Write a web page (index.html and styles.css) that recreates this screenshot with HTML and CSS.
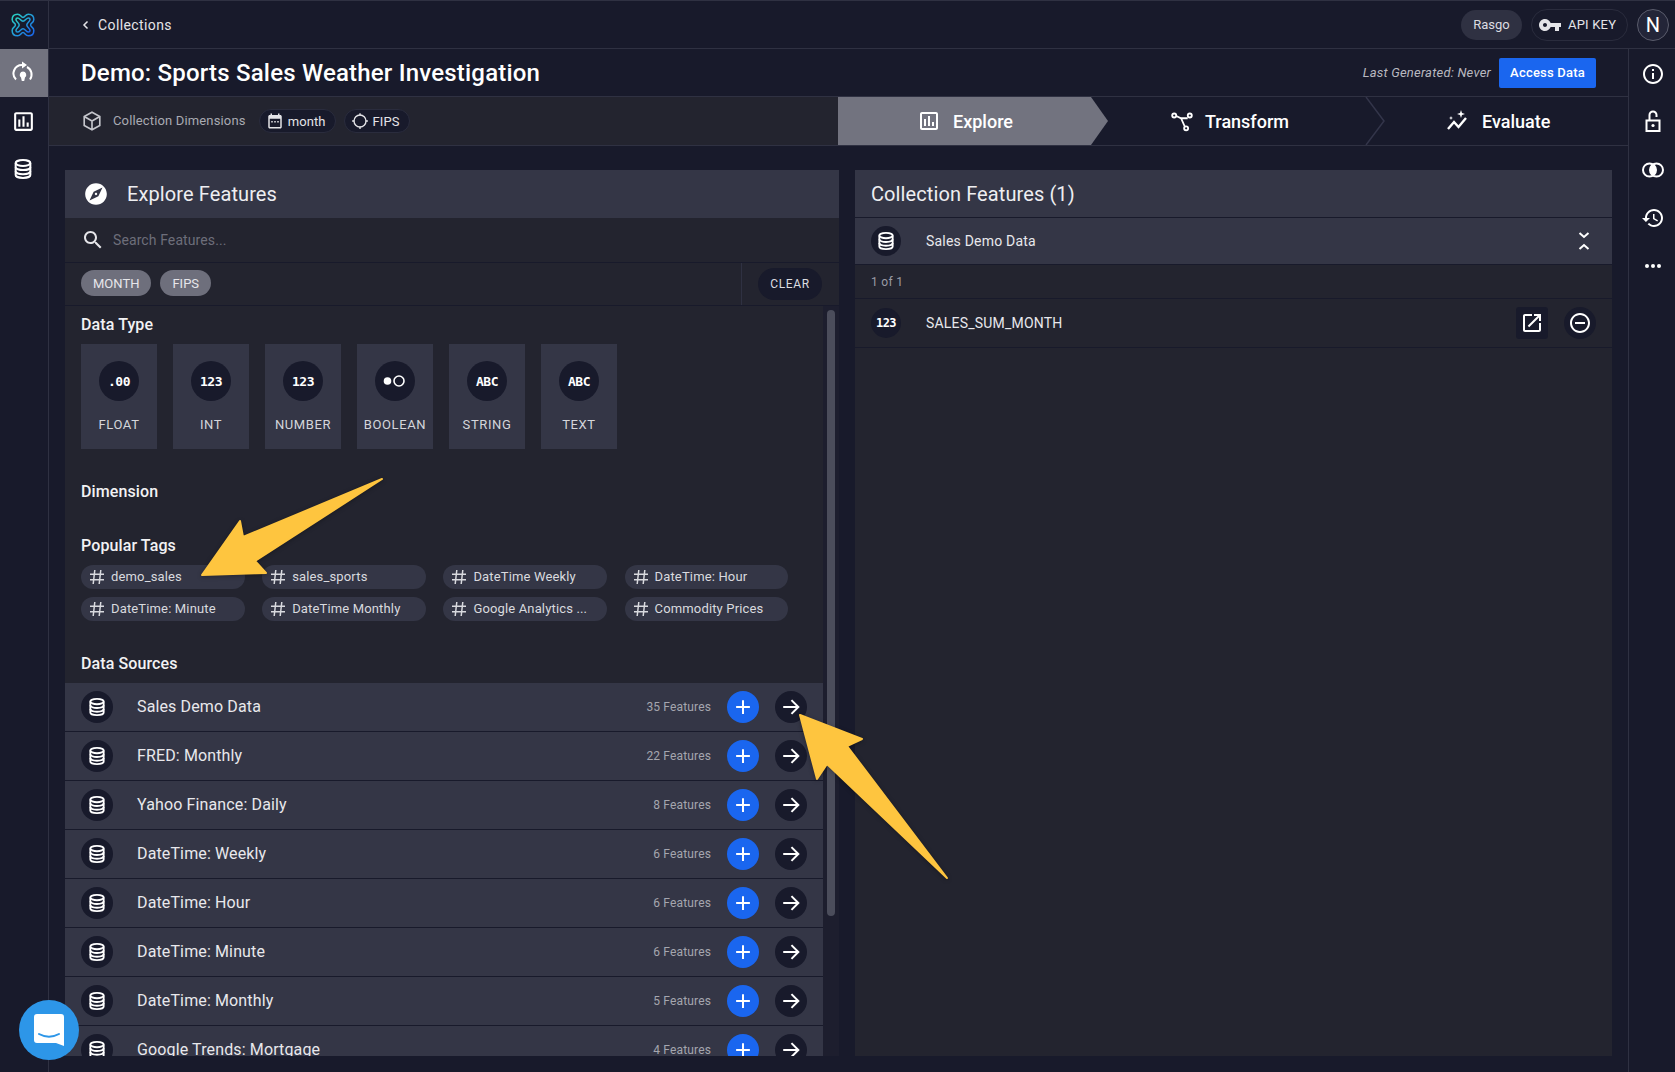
FILE: index.html
```html
<!DOCTYPE html>
<html lang="en">
<head>
    <meta charset="UTF-8">
    <title>Demo: Sports Sales Weather Investigation</title>
    <link rel="stylesheet" href="styles.css">
</head>
<body>
    <svg class="sprites" width="0" height="0">
        <defs>
            <linearGradient id="logo-grad" x1="0" y1="0" x2="1" y2="1">
                <stop offset="0" stop-color="#2ad6c2"/>
                <stop offset="1" stop-color="#1a63ee"/>
            </linearGradient>
        </defs>
        <symbol id="i-db" viewBox="0 0 24 24"><g fill="none" stroke="currentColor" stroke-width="2.200"><ellipse cx="12" cy="5.500" rx="8" ry="3.200"/><path d="M4 5.500v13c0 1.800 3.600 3.200 8 3.200s8-1.400 8-3.200v-13"/><path d="M4 10c0 1.800 3.600 3.200 8 3.200s8-1.400 8-3.200M4 14.500c0 1.800 3.600 3.200 8 3.200s8-1.400 8-3.200"/></g></symbol>
        <symbol id="i-chart" viewBox="0 0 24 24"><path fill="currentColor" d="M19 3H5c-1.100 0-2 .9-2 2v14c0 1.100.9 2 2 2h14c1.100 0 2-.9 2-2V5c0-1.100-.9-2-2-2zm0 16H5V5h14v14zM7 10h2v7H7zm4-3h2v10h-2zm4 6h2v4h-2z"/></symbol>
        <symbol id="i-hash" viewBox="0 0 16 16"><path fill="none" stroke="currentColor" stroke-width="1.500" d="M5.800 1 4.200 15M11.800 1l-1.600 14M1 5.300h14M1 10.700h14"/></symbol>
        <symbol id="i-plus" viewBox="0 0 24 24"><path fill="none" stroke="currentColor" stroke-width="2.200" d="M12 4.500v15M4.500 12h15"/></symbol>
        <symbol id="i-arrow" viewBox="0 0 24 24"><path fill="none" stroke="currentColor" stroke-width="2.200" d="M3.500 12h16M12.500 4.500 20 12l-7.500 7.500"/></symbol>
    </svg>

    <div class="app">
        <aside class="rail">
            <div class="rail-item rail-logo">
                <svg width="26" height="26" viewBox="0 0 24 24" fill="none" stroke="url(#logo-grad)" stroke-width="1.400"><path d="M7 2C10 2 10 5 12 5C14 5 14 2 17 2C21 2 22 5 22 7C22 10 19 10 19 12C19 14 22 14 22 17C22 21 19 22 17 22C14 22 14 19 12 19C10 19 10 22 7 22C3 22 2 19 2 17C2 14 5 14 5 12C5 10 2 10 2 7C2 3 5 2 7 2Z"/><path d="M7 5.500C9 5.500 10 8.500 12 8.500C14 8.500 15 5.500 17 5.500C18 5.500 18.500 6 18.500 7C18.500 9 15.500 10 15.500 12C15.500 14 18.500 15 18.500 17C18.500 18 18 18.500 17 18.500C15 18.500 14 15.500 12 15.500C10 15.500 9 18.500 7 18.500C6 18.500 5.500 18 5.500 17C5.500 15 8.500 14 8.500 12C8.500 10 5.500 9 5.500 7C5.500 6 6 5.500 7 5.500Z"/></svg>
            </div>
            <div class="rail-item rail-active">
                <svg width="24" height="24" viewBox="0 0 24 24"><g fill="none" stroke="currentColor" stroke-width="2"><path d="M5 18.500a8.500 8.500 0 0 1 6-14.500"/><path d="M19 18.500a8.500 8.500 0 0 0-3-12.500"/></g><path fill="currentColor" d="M11 .5 16 4l-5 3.500zM12 10.500a3.300 3.300 0 0 1 2 5.900L13.200 20h-2.400L10 16.400a3.300 3.300 0 0 1 2-5.900z"/></svg>
            </div>
            <div class="rail-item"><svg width="25" height="25"><use href="#i-chart"/></svg></div>
            <div class="rail-item"><svg width="22" height="22"><use href="#i-db"/></svg></div>
        </aside>

        <div class="main">
            <header class="topbar">
                <div class="crumb">
                    <svg width="10" height="10" viewBox="0 0 10 10"><path fill="none" stroke="currentColor" stroke-width="1.500" d="M6.500 1.500 3 5l3.500 3.500"/></svg>
                    <span>Collections</span>
                </div>
                <div class="topbar-right">
                    <span class="org-pill">Rasgo</span>
                    <span class="key-pill">
                        <svg width="24" height="24" viewBox="0 0 24 24"><path fill="currentColor" d="M12.650 10C11.830 7.670 9.610 6 7 6c-3.310 0-6 2.690-6 6s2.690 6 6 6c2.610 0 4.830-1.670 5.650-4H17v4h4v-4h2v-4H12.650zM7 14c-1.100 0-2-.9-2-2s.9-2 2-2 2 .9 2 2-.9 2-2 2z"/></svg>
                        API KEY
                    </span>
                    <span class="avatar">N</span>
                </div>
            </header>

            <div class="workspace">
                <div class="content">
                    <div class="title-row">
                        <h1>Demo: Sports Sales Weather Investigation</h1>
                        <div class="title-actions">
                            <em>Last Generated: Never</em>
                            <button class="btn-primary">Access Data</button>
                        </div>
                    </div>

                    <div class="steps-row">
                        <div class="dims">
                            <svg class="dims-cube" width="22" height="22" viewBox="0 0 24 24" fill="none" stroke="currentColor" stroke-width="1.800"><path d="M12 2.500 20.500 7v10L12 21.500 3.500 17V7zM3.500 7 12 12l8.500-5M12 12v9.500"/></svg>
                            <span class="dims-label">Collection Dimensions</span>
                            <span class="dim-chip">
                                <svg width="18" height="18" viewBox="0 0 24 24"><path fill="currentColor" d="M19 4h-1V2h-2v2H8V2H6v2H5c-1.100 0-2 .9-2 2v14c0 1.100.9 2 2 2h14c1.100 0 2-.9 2-2V6c0-1.100-.9-2-2-2zm0 16H5V9h14v11zM7 12h2v2H7zm4 0h2v2h-2zm4 0h2v2h-2z"/></svg>
                                month
                            </span>
                            <span class="dim-chip">
                                <svg width="18" height="18" viewBox="0 0 24 24" fill="none" stroke="currentColor" stroke-width="1.800"><circle cx="12" cy="12" r="8"/><path d="M12 1.500v3M12 19.500v3M1.500 12h3M19.500 12h3"/></svg>
                                FIPS
                            </span>
                        </div>
                        <nav class="steps">
                            <div class="step step-explore">
                                <svg width="24" height="24"><use href="#i-chart"/></svg>
                                <span>Explore</span>
                            </div>
                            <div class="step step-transform">
                                <svg width="22" height="22" viewBox="0 0 24 24" fill="none" stroke="currentColor" stroke-width="2"><circle cx="3.500" cy="6" r="2.200"/><circle cx="20.500" cy="6" r="2.200"/><circle cx="16.500" cy="20" r="2.200"/><path d="M5.700 6.500 11 9h7.200M11 9l4 9"/></svg>
                                <span>Transform</span>
                                <svg class="step-chevron" width="20" height="48" viewBox="0 0 20 48"><path fill="none" stroke="#33354a" stroke-width="1.500" d="M1 0 19 24 1 48"/></svg>
                            </div>
                            <div class="step step-evaluate">
                                <svg width="24" height="24" viewBox="0 0 24 24"><path fill="none" stroke="currentColor" stroke-width="2.400" d="M2 20l6-7 4.500 5L20 9"/><path fill="currentColor" d="M15 1l1 3 3 1-3 1-1 3-1-3-3-1 3-1zM5 7l.6 1.500L7 9l-1.400.5L5 11l-.6-1.500L3 9l1.400-.5z"/></svg>
                                <span>Evaluate</span>
                            </div>
                        </nav>
                    </div>

                    <div class="panels">
                        <section class="panel panel-explore">
                            <div class="panel-head">
                                <svg class="head-icon" width="26" height="26" viewBox="0 0 24 24"><path fill="currentColor" d="M12 10.900c-.61 0-1.100.49-1.100 1.100s.49 1.100 1.100 1.100c.61 0 1.100-.49 1.100-1.100s-.49-1.100-1.100-1.100zM12 2C6.480 2 2 6.480 2 12s4.480 10 10 10 10-4.480 10-10S17.520 2 12 2zm2.190 12.190L6 18l3.810-8.190L18 6l-3.810 8.190z"/></svg>
                                <h2>Explore Features</h2>
                            </div>
                            <div class="search">
                                <svg width="24" height="24" viewBox="0 0 24 24"><path fill="currentColor" d="M15.500 14h-.79l-.28-.27C15.410 12.590 16 11.110 16 9.500 16 5.910 13.090 3 9.500 3S3 5.910 3 9.500 5.910 16 9.500 16c1.610 0 3.090-.59 4.230-1.570l.27.28v.79l5 4.990L20.490 19l-4.990-5zm-6 0C7.010 14 5 11.990 5 9.500S7.010 5 9.500 5 14 7.010 14 9.500 11.990 14 9.500 14z"/></svg>
                                <span>Search Features...</span>
                            </div>
                            <div class="filters">
                                <div class="filter-chips">
                                    <span class="filter-chip">MONTH</span>
                                    <span class="filter-chip">FIPS</span>
                                </div>
                                <div class="filter-clear"><span>CLEAR</span></div>
                            </div>
                            <div class="scroll-area">
                                <div class="scroll-body">
                                    <h3 class="section-title">Data Type</h3>
                                    <div class="types">
                                        <div class="type-card"><span class="glyph">.00</span><span class="type-label">FLOAT</span></div>
                                        <div class="type-card"><span class="glyph">123</span><span class="type-label">INT</span></div>
                                        <div class="type-card"><span class="glyph">123</span><span class="type-label">NUMBER</span></div>
                                        <div class="type-card">
                                            <span class="glyph"><svg width="24" height="14" viewBox="0 0 24 14"><circle cx="4.500" cy="7" r="3.800" fill="currentColor"/><circle cx="16" cy="7" r="5" fill="none" stroke="currentColor" stroke-width="1.600"/></svg></span>
                                            <span class="type-label">BOOLEAN</span>
                                        </div>
                                        <div class="type-card"><span class="glyph">ABC</span><span class="type-label">STRING</span></div>
                                        <div class="type-card"><span class="glyph">ABC</span><span class="type-label">TEXT</span></div>
                                    </div>

                                    <h3 class="section-title title-dimension">Dimension</h3>
                                    <h3 class="section-title title-tags">Popular Tags</h3>
                                    <div class="tags">
                                        <span class="tag"><svg width="16" height="16"><use href="#i-hash"/></svg>demo_sales</span>
                                        <span class="tag"><svg width="16" height="16"><use href="#i-hash"/></svg>sales_sports</span>
                                        <span class="tag"><svg width="16" height="16"><use href="#i-hash"/></svg>DateTime Weekly</span>
                                        <span class="tag"><svg width="16" height="16"><use href="#i-hash"/></svg>DateTime: Hour</span>
                                        <span class="tag"><svg width="16" height="16"><use href="#i-hash"/></svg>DateTime: Minute</span>
                                        <span class="tag"><svg width="16" height="16"><use href="#i-hash"/></svg>DateTime Monthly</span>
                                        <span class="tag"><svg width="16" height="16"><use href="#i-hash"/></svg>Google Analytics ...</span>
                                        <span class="tag"><svg width="16" height="16"><use href="#i-hash"/></svg>Commodity Prices</span>
                                    </div>

                                    <h3 class="section-title title-sources">Data Sources</h3>
                                    <ul class="sources">
                                        <li class="source"><span class="source-icon"><svg width="20" height="20"><use href="#i-db"/></svg></span><span class="source-name">Sales Demo Data</span><span class="source-count">35 Features</span><span class="round-btn btn-add"><svg width="22" height="22"><use href="#i-plus"/></svg></span><span class="round-btn btn-go"><svg width="22" height="22"><use href="#i-arrow"/></svg></span></li>
                                        <li class="source"><span class="source-icon"><svg width="20" height="20"><use href="#i-db"/></svg></span><span class="source-name">FRED: Monthly</span><span class="source-count">22 Features</span><span class="round-btn btn-add"><svg width="22" height="22"><use href="#i-plus"/></svg></span><span class="round-btn btn-go"><svg width="22" height="22"><use href="#i-arrow"/></svg></span></li>
                                        <li class="source"><span class="source-icon"><svg width="20" height="20"><use href="#i-db"/></svg></span><span class="source-name">Yahoo Finance: Daily</span><span class="source-count">8 Features</span><span class="round-btn btn-add"><svg width="22" height="22"><use href="#i-plus"/></svg></span><span class="round-btn btn-go"><svg width="22" height="22"><use href="#i-arrow"/></svg></span></li>
                                        <li class="source"><span class="source-icon"><svg width="20" height="20"><use href="#i-db"/></svg></span><span class="source-name">DateTime: Weekly</span><span class="source-count">6 Features</span><span class="round-btn btn-add"><svg width="22" height="22"><use href="#i-plus"/></svg></span><span class="round-btn btn-go"><svg width="22" height="22"><use href="#i-arrow"/></svg></span></li>
                                        <li class="source"><span class="source-icon"><svg width="20" height="20"><use href="#i-db"/></svg></span><span class="source-name">DateTime: Hour</span><span class="source-count">6 Features</span><span class="round-btn btn-add"><svg width="22" height="22"><use href="#i-plus"/></svg></span><span class="round-btn btn-go"><svg width="22" height="22"><use href="#i-arrow"/></svg></span></li>
                                        <li class="source"><span class="source-icon"><svg width="20" height="20"><use href="#i-db"/></svg></span><span class="source-name">DateTime: Minute</span><span class="source-count">6 Features</span><span class="round-btn btn-add"><svg width="22" height="22"><use href="#i-plus"/></svg></span><span class="round-btn btn-go"><svg width="22" height="22"><use href="#i-arrow"/></svg></span></li>
                                        <li class="source"><span class="source-icon"><svg width="20" height="20"><use href="#i-db"/></svg></span><span class="source-name">DateTime: Monthly</span><span class="source-count">5 Features</span><span class="round-btn btn-add"><svg width="22" height="22"><use href="#i-plus"/></svg></span><span class="round-btn btn-go"><svg width="22" height="22"><use href="#i-arrow"/></svg></span></li>
                                        <li class="source"><span class="source-icon"><svg width="20" height="20"><use href="#i-db"/></svg></span><span class="source-name">Google Trends: Mortgage</span><span class="source-count">4 Features</span><span class="round-btn btn-add"><svg width="22" height="22"><use href="#i-plus"/></svg></span><span class="round-btn btn-go"><svg width="22" height="22"><use href="#i-arrow"/></svg></span></li>
                                    </ul>
                                </div>
                                <div class="scroll-track"><div class="scroll-thumb"></div></div>
                            </div>
                        </section>

                        <section class="panel panel-collection">
                            <div class="panel-head"><h2>Collection Features (1)</h2></div>
                            <div class="group-head">
                                <span class="small-icon"><svg width="20" height="20"><use href="#i-db"/></svg></span>
                                <span class="group-name">Sales Demo Data</span>
                                <svg width="16" height="20" viewBox="0 0 16 20"><path fill="none" stroke="currentColor" stroke-width="2" d="M3.500 2 8 6l4.500-4M3.500 18 8 14l4.500 4"/></svg>
                            </div>
                            <div class="pager">1 of 1</div>
                            <div class="feature">
                                <span class="small-icon glyph-small">123</span>
                                <span class="feature-name">SALES_SUM_MONTH</span>
                                <span class="square-btn"><svg width="24" height="24" viewBox="0 0 24 24"><path fill="currentColor" d="M19 19H5V5h7V3H5c-1.110 0-2 .9-2 2v14c0 1.100.89 2 2 2h14c1.100 0 2-.9 2-2v-7h-2v7zM14 3v2h3.590l-9.830 9.830 1.410 1.410L19 6.410V10h2V3h-7z"/></svg></span>
                                <span class="minus-btn"><svg width="24" height="24" viewBox="0 0 24 24"><path fill="currentColor" d="M7 11v2h10v-2H7zm5-9C6.480 2 2 6.480 2 12s4.480 10 10 10 10-4.480 10-10S17.520 2 12 2zm0 18c-4.410 0-8-3.590-8-8s3.590-8 8-8 8 3.590 8 8-3.590 8-8 8z"/></svg></span>
                            </div>
                        </section>
                    </div>
                </div>

                <aside class="side-tools">
                    <div class="tool"><svg width="24" height="24" viewBox="0 0 24 24"><path fill="currentColor" d="M11 7h2v2h-2zm0 4h2v6h-2zm1-9C6.480 2 2 6.480 2 12s4.480 10 10 10 10-4.480 10-10S17.520 2 12 2zm0 18c-4.410 0-8-3.590-8-8s3.590-8 8-8 8 3.590 8 8-3.590 8-8 8z"/></svg></div>
                    <div class="tool"><svg width="24" height="24" viewBox="0 0 24 24"><path fill="none" stroke="currentColor" stroke-width="2" d="M5.500 10.500h13v10.500h-13zM8.500 10.500V5a3.500 3.500 0 0 1 7 0v2"/><circle cx="12" cy="15.500" r="1.600" fill="currentColor"/></svg></div>
                    <div class="tool"><svg width="24" height="24" viewBox="0 0 24 24"><g fill="none" stroke="currentColor" stroke-width="2"><circle cx="8.500" cy="12" r="6.500"/><circle cx="15.500" cy="12" r="6.500"/></g><path fill="currentColor" d="M12 6.500a6.500 6.500 0 0 1 0 11 6.500 6.500 0 0 1 0-11z"/></svg></div>
                    <div class="tool"><svg width="24" height="24" viewBox="0 0 24 24"><path fill="currentColor" d="M13 3c-4.970 0-9 4.030-9 9H1l3.890 3.890.07.14L9 12H6c0-3.870 3.130-7 7-7s7 3.130 7 7-3.130 7-7 7c-1.930 0-3.680-.79-4.940-2.060l-1.420 1.420C8.270 19.990 10.510 21 13 21c4.970 0 9-4.030 9-9s-4.030-9-9-9zm-1 5v5l4.280 2.540.72-1.210-3.500-2.080V8H12z"/></svg></div>
                    <div class="tool"><svg width="24" height="24" viewBox="0 0 24 24"><g fill="currentColor"><circle cx="6" cy="12" r="2"/><circle cx="12" cy="12" r="2"/><circle cx="18" cy="12" r="2"/></g></svg></div>
                </aside>
            </div>
        </div>
    </div>

    <div class="chat-bubble">
        <svg width="32" height="34" viewBox="0 0 32 34"><path fill="#fff" d="M4 1h24a3 3 0 0 1 3 3v29l-8-3H4a3 3 0 0 1-3-3V4a3 3 0 0 1 3-3z"/><path fill="none" stroke="#2d96e8" stroke-width="2" stroke-linecap="round" d="M6 21c6 3.500 14 3.500 20 0"/></svg>
    </div>

    <!-- yellow annotation arrows drawn over the screen -->
    <svg class="annotations" width="1675" height="1072" viewBox="0 0 1675 1072">
        <g fill="#fec53f" stroke="#fec53f" stroke-width="2" stroke-linejoin="round">
            <path d="M382 479 243 537 240 521 202 575 266 573 255 561z"/>
            <path d="M800 715 862 739 847 746 947 878 827 764 817 779z"/>
        </g>
    </svg>
</body>
</html>
```

FILE: styles.css
```css
*{
    box-sizing: border-box;
    font-family: Roboto, "Liberation Sans", sans-serif;
}

html, body{
    margin: 0;
    padding: 0;
}

body{
    width: 1675px;
    height: 1072px;
    overflow: hidden;
    position: relative;
    background: #181a2b;
    color: #fff;
}

h1, h2, h3, ul{
    margin: 0;
    padding: 0;
}

svg{
    display: block;
    flex: none;
}

.sprites{
    position: absolute;
}

.app{
    display: flex;
    height: 100%;
    border-top: 1px solid #2f3142;
}

/* left rail */
.rail{
    width: 49px;
    flex: none;
    border-right: 1px solid #2f3142;
}
.rail-item{
    height: 48px;
    display: flex;
    align-items: center;
    justify-content: center;
    padding-right: 2px;
}
.rail-active{
    background: #72737f;
}

.main{
    flex: 1;
    min-width: 0;
    display: flex;
    flex-direction: column;
}

/* top bar */
.topbar{
    height: 48px;
    flex: none;
    display: flex;
    align-items: center;
    justify-content: space-between;
    padding: 0 6px 0 32px;
    border-bottom: 1px solid #2f3142;
}
.crumb{
    display: flex;
    align-items: center;
    gap: 7px;
    font-size: 14px;
    letter-spacing: .4px;
    color: #e4e4e8;
}
.topbar-right{
    display: flex;
    align-items: center;
    gap: 9px;
}
.org-pill{
    width: 61px;
    height: 30px;
    border-radius: 15px;
    background: #2f3142;
    display: flex;
    align-items: center;
    justify-content: center;
    font-size: 13px;
    color: #dcdde1;
}
.key-pill{
    width: 97px;
    height: 32px;
    border-radius: 16px;
    border: 1px solid #2a2c3d;
    display: flex;
    align-items: center;
    padding-left: 6px;
    gap: 6px;
    font-size: 13px;
    letter-spacing: .2px;
    color: #e4e4e8;
}
.avatar{
    width: 32px;
    height: 32px;
    border-radius: 50%;
    border: 1px solid #5a5c6c;
    background: #232538;
    display: flex;
    align-items: center;
    justify-content: center;
    font-size: 20px;
}

.workspace{
    flex: 1;
    min-height: 0;
    display: flex;
}
.content{
    flex: 1;
    min-width: 0;
    display: flex;
    flex-direction: column;
}

/* title row */
.title-row{
    height: 48px;
    flex: none;
    display: flex;
    align-items: center;
    justify-content: space-between;
    padding: 0 32px 0 32px;
    border-bottom: 1px solid #2f3142;
}
.title-row h1{
    font-size: 24px;
    font-weight: 500;
    letter-spacing: .2px;
}
.title-actions{
    display: flex;
    align-items: center;
    gap: 8px;
}
.title-actions em{
    font-size: 13px;
    color: #b8b9c0;
    letter-spacing: .2px;
}
.btn-primary{
    width: 97px;
    height: 30px;
    border: none;
    border-radius: 2px;
    background: #1a66ef;
    color: #fff;
    font-size: 13px;
    font-weight: 500;
    letter-spacing: .2px;
}

/* dimensions + steps */
.steps-row{
    height: 49px;
    flex: none;
    display: flex;
    border-bottom: 1px solid #2f3142;
}
.dims{
    width: 789px;
    flex: none;
    display: flex;
    align-items: center;
    background: #23242f;
    padding-left: 32px;
    font-size: 13px;
}
.dims-cube{
    color: #c5c6cc;
}
.dims-label{
    margin-left: 10px;
    margin-right: 13px;
    padding-bottom: 2px;
    color: #a9aab2;
    letter-spacing: .15px;
}
.dim-chip{
    height: 24px;
    border-radius: 12px;
    background: #181a2b;
    border: 1px solid #2a2c3d;
    display: flex;
    align-items: center;
    gap: 4px;
    padding: 0 9px 0 6px;
    margin-right: 8px;
    color: #e4e4e8;
    letter-spacing: .1px;
}
.steps{
    flex: 1;
    display: flex;
}
.step{
    position: relative;
    height: 48px;
    display: flex;
    align-items: center;
    gap: 12px;
    font-size: 18px;
    font-weight: 500;
}
.step-explore{
    width: 270px;
    padding-left: 79px;
    background: #72737f;
    clip-path: polygon(0 0, 253px 0, 270px 24px, 253px 100%, 0 100%);
}
.step-transform{
    width: 277px;
    padding-left: 63px;
}
.step-chevron{
    position: absolute;
    top: 0;
    right: 0;
}
.step-evaluate{
    flex: 1;
    padding-left: 61px;
}

/* panels */
.panels{
    flex: 1;
    min-height: 0;
    display: grid;
    grid-template-columns: 774px 757px;
    gap: 16px;
    padding: 24px 16px 16px 16px;
}
.panel{
    background: #23242f;
    display: flex;
    flex-direction: column;
    min-height: 0;
    overflow: hidden;
}
.panel-head{
    height: 48px;
    flex: none;
    display: flex;
    align-items: center;
    padding-left: 16px;
    background: #343646;
}
.panel-collection .panel-head{
    border-bottom: 1px solid #181a2b;
}
.panel-head h2{
    font-size: 20px;
    font-weight: 400;
    letter-spacing: .1px;
    color: #eeeef1;
}
.head-icon{
    margin-left: 2px;
    margin-right: 18px;
}
.search{
    height: 45px;
    flex: none;
    display: flex;
    align-items: center;
    gap: 8px;
    padding-left: 16px;
    font-size: 14px;
    letter-spacing: .1px;
    color: #6d6e7a;
    border-bottom: 1px solid #181a2b;
}
.search svg{
    color: #e6e6ea;
}
.filters{
    height: 43px;
    flex: none;
    display: flex;
    border-bottom: 1px solid #181a2b;
}
.filter-chips{
    flex: 1;
    display: flex;
    align-items: center;
    gap: 9px;
    padding-left: 16px;
    padding-bottom: 2px;
}
.filter-chip{
    height: 26px;
    border-radius: 13px;
    background: #6e6f7c;
    display: flex;
    align-items: center;
    padding: 0 12px;
    font-size: 13px;
    color: #e6e6ea;
}
.filter-clear{
    width: 98px;
    display: flex;
    align-items: center;
    padding-left: 16px;
    border-left: 1px solid #2f3142;
}
.filter-clear span{
    width: 64px;
    height: 32px;
    border-radius: 16px;
    background: #181a2b;
    display: flex;
    align-items: center;
    justify-content: center;
    font-size: 12px;
    letter-spacing: .6px;
    color: #dcdde1;
}

/* scrolling body of the explore panel */
.scroll-area{
    flex: 1;
    min-height: 0;
    display: flex;
}
.scroll-body{
    width: 758px;
    flex: none;
    overflow: hidden;
}
.scroll-track{
    flex: 1;
    background: #1d1e2e;
    padding: 4px 4px 0;
}
.scroll-thumb{
    width: 8px;
    height: 606px;
    border-radius: 4px;
    background: #4b4d5b;
}
.section-title{
    font-size: 16px;
    line-height: 20px;
    font-weight: 500;
    letter-spacing: .1px;
    padding-left: 16px;
    margin-top: 9px;
    color: #f2f2f4;
}
.title-dimension{
    margin-top: 33px;
}
.title-tags{
    margin-top: 34px;
}
.title-sources{
    margin-top: 33px;
}

.types{
    display: flex;
    gap: 16px;
    padding-left: 16px;
    margin-top: 9px;
}
.type-card{
    width: 76px;
    height: 105px;
    background: #343646;
    display: flex;
    flex-direction: column;
    align-items: center;
    padding-top: 17px;
}
.glyph{
    width: 40px;
    height: 40px;
    border-radius: 50%;
    background: #181a2b;
    display: flex;
    align-items: center;
    justify-content: center;
    font-family: "DejaVu Sans Mono", monospace;
    font-size: 13px;
    font-weight: 700;
    letter-spacing: -.5px;
}
.type-label{
    margin-top: 16px;
    font-size: 13px;
    line-height: 16px;
    letter-spacing: .6px;
    color: #d5d6db;
}

.tags{
    display: grid;
    grid-template-columns: repeat(4, 163.500px);
    gap: 8px 17.700px;
    padding-left: 16px;
    margin-top: 9px;
}
.tag{
    height: 24px;
    border-radius: 12px;
    background: #343646;
    display: flex;
    align-items: center;
    gap: 6px;
    padding-left: 8px;
    padding-bottom: 2px;
    font-size: 13px;
    letter-spacing: .15px;
    color: #d9dadf;
}
.tag svg{
    margin-bottom: -2px;
}

.sources{
    list-style: none;
    margin-top: 9px;
}
.source{
    height: 49px;
    display: flex;
    align-items: center;
    padding: 0 16px;
    background: #343646;
    border-bottom: 1px solid #181a2b;
}
.source-icon{
    width: 32px;
    height: 32px;
    border-radius: 50%;
    background: #181a2b;
    display: flex;
    align-items: center;
    justify-content: center;
}
.source-name{
    flex: 1;
    margin-left: 24px;
    padding-bottom: 2px;
    font-size: 16px;
    letter-spacing: .13px;
    color: #e8e8ec;
}
.source-count{
    font-size: 12px;
    letter-spacing: .15px;
    color: #a5a6af;
    margin-right: 16px;
}
.round-btn{
    width: 32px;
    height: 32px;
    border-radius: 50%;
    display: flex;
    align-items: center;
    justify-content: center;
}
.btn-add{
    background: #1a66ef;
    margin-right: 16px;
}
.btn-go{
    background: #181a2b;
}

/* collection features */
.group-head{
    height: 47px;
    flex: none;
    display: flex;
    align-items: center;
    padding: 0 20px 0 16px;
    background: #343646;
    border-bottom: 1px solid #181a2b;
}
.small-icon{
    width: 30px;
    height: 30px;
    border-radius: 50%;
    background: #181a2b;
    display: flex;
    align-items: center;
    justify-content: center;
    flex: none;
}
.glyph-small{
    font-family: "DejaVu Sans Mono", monospace;
    font-size: 12px;
    font-weight: 700;
    letter-spacing: -.5px;
}
.group-name{
    flex: 1;
    margin-left: 25px;
    font-size: 14px;
    letter-spacing: .2px;
    color: #e8e8ec;
}
.pager{
    height: 34px;
    flex: none;
    display: flex;
    align-items: center;
    padding-left: 16px;
    font-size: 12px;
    letter-spacing: .3px;
    color: #9a9ba5;
    border-bottom: 1px solid #181a2b;
}
.feature{
    height: 49px;
    flex: none;
    display: flex;
    align-items: center;
    padding: 0 16px;
    border-bottom: 1px solid #181a2b;
}
.feature-name{
    flex: 1;
    margin-left: 25px;
    font-size: 14px;
    letter-spacing: .2px;
    color: #e8e8ec;
}
.square-btn{
    width: 32px;
    height: 32px;
    border-radius: 3px;
    background: #181a2b;
    display: flex;
    align-items: center;
    justify-content: center;
    margin-right: 16px;
}
.minus-btn{
    width: 32px;
    height: 32px;
    border-radius: 50%;
    background: #181a2b;
    display: flex;
    align-items: center;
    justify-content: center;
}

/* right tools */
.side-tools{
    width: 47px;
    flex: none;
    padding: 1px 0 0 1px;
    border-left: 1px solid #2f3142;
}
.tool{
    height: 48px;
    display: flex;
    align-items: center;
    justify-content: center;
}

/* things floating over the page */
.chat-bubble{
    position: absolute;
    left: 19px;
    top: 1000px;
    width: 60px;
    height: 60px;
    border-radius: 50%;
    background: #2d96e8;
    display: flex;
    align-items: center;
    justify-content: center;
}
.annotations{
    position: absolute;
    left: 0;
    top: 0;
    pointer-events: none;
    filter: drop-shadow(0 1px 2px rgba(0, 0, 0, .3));
}
```
